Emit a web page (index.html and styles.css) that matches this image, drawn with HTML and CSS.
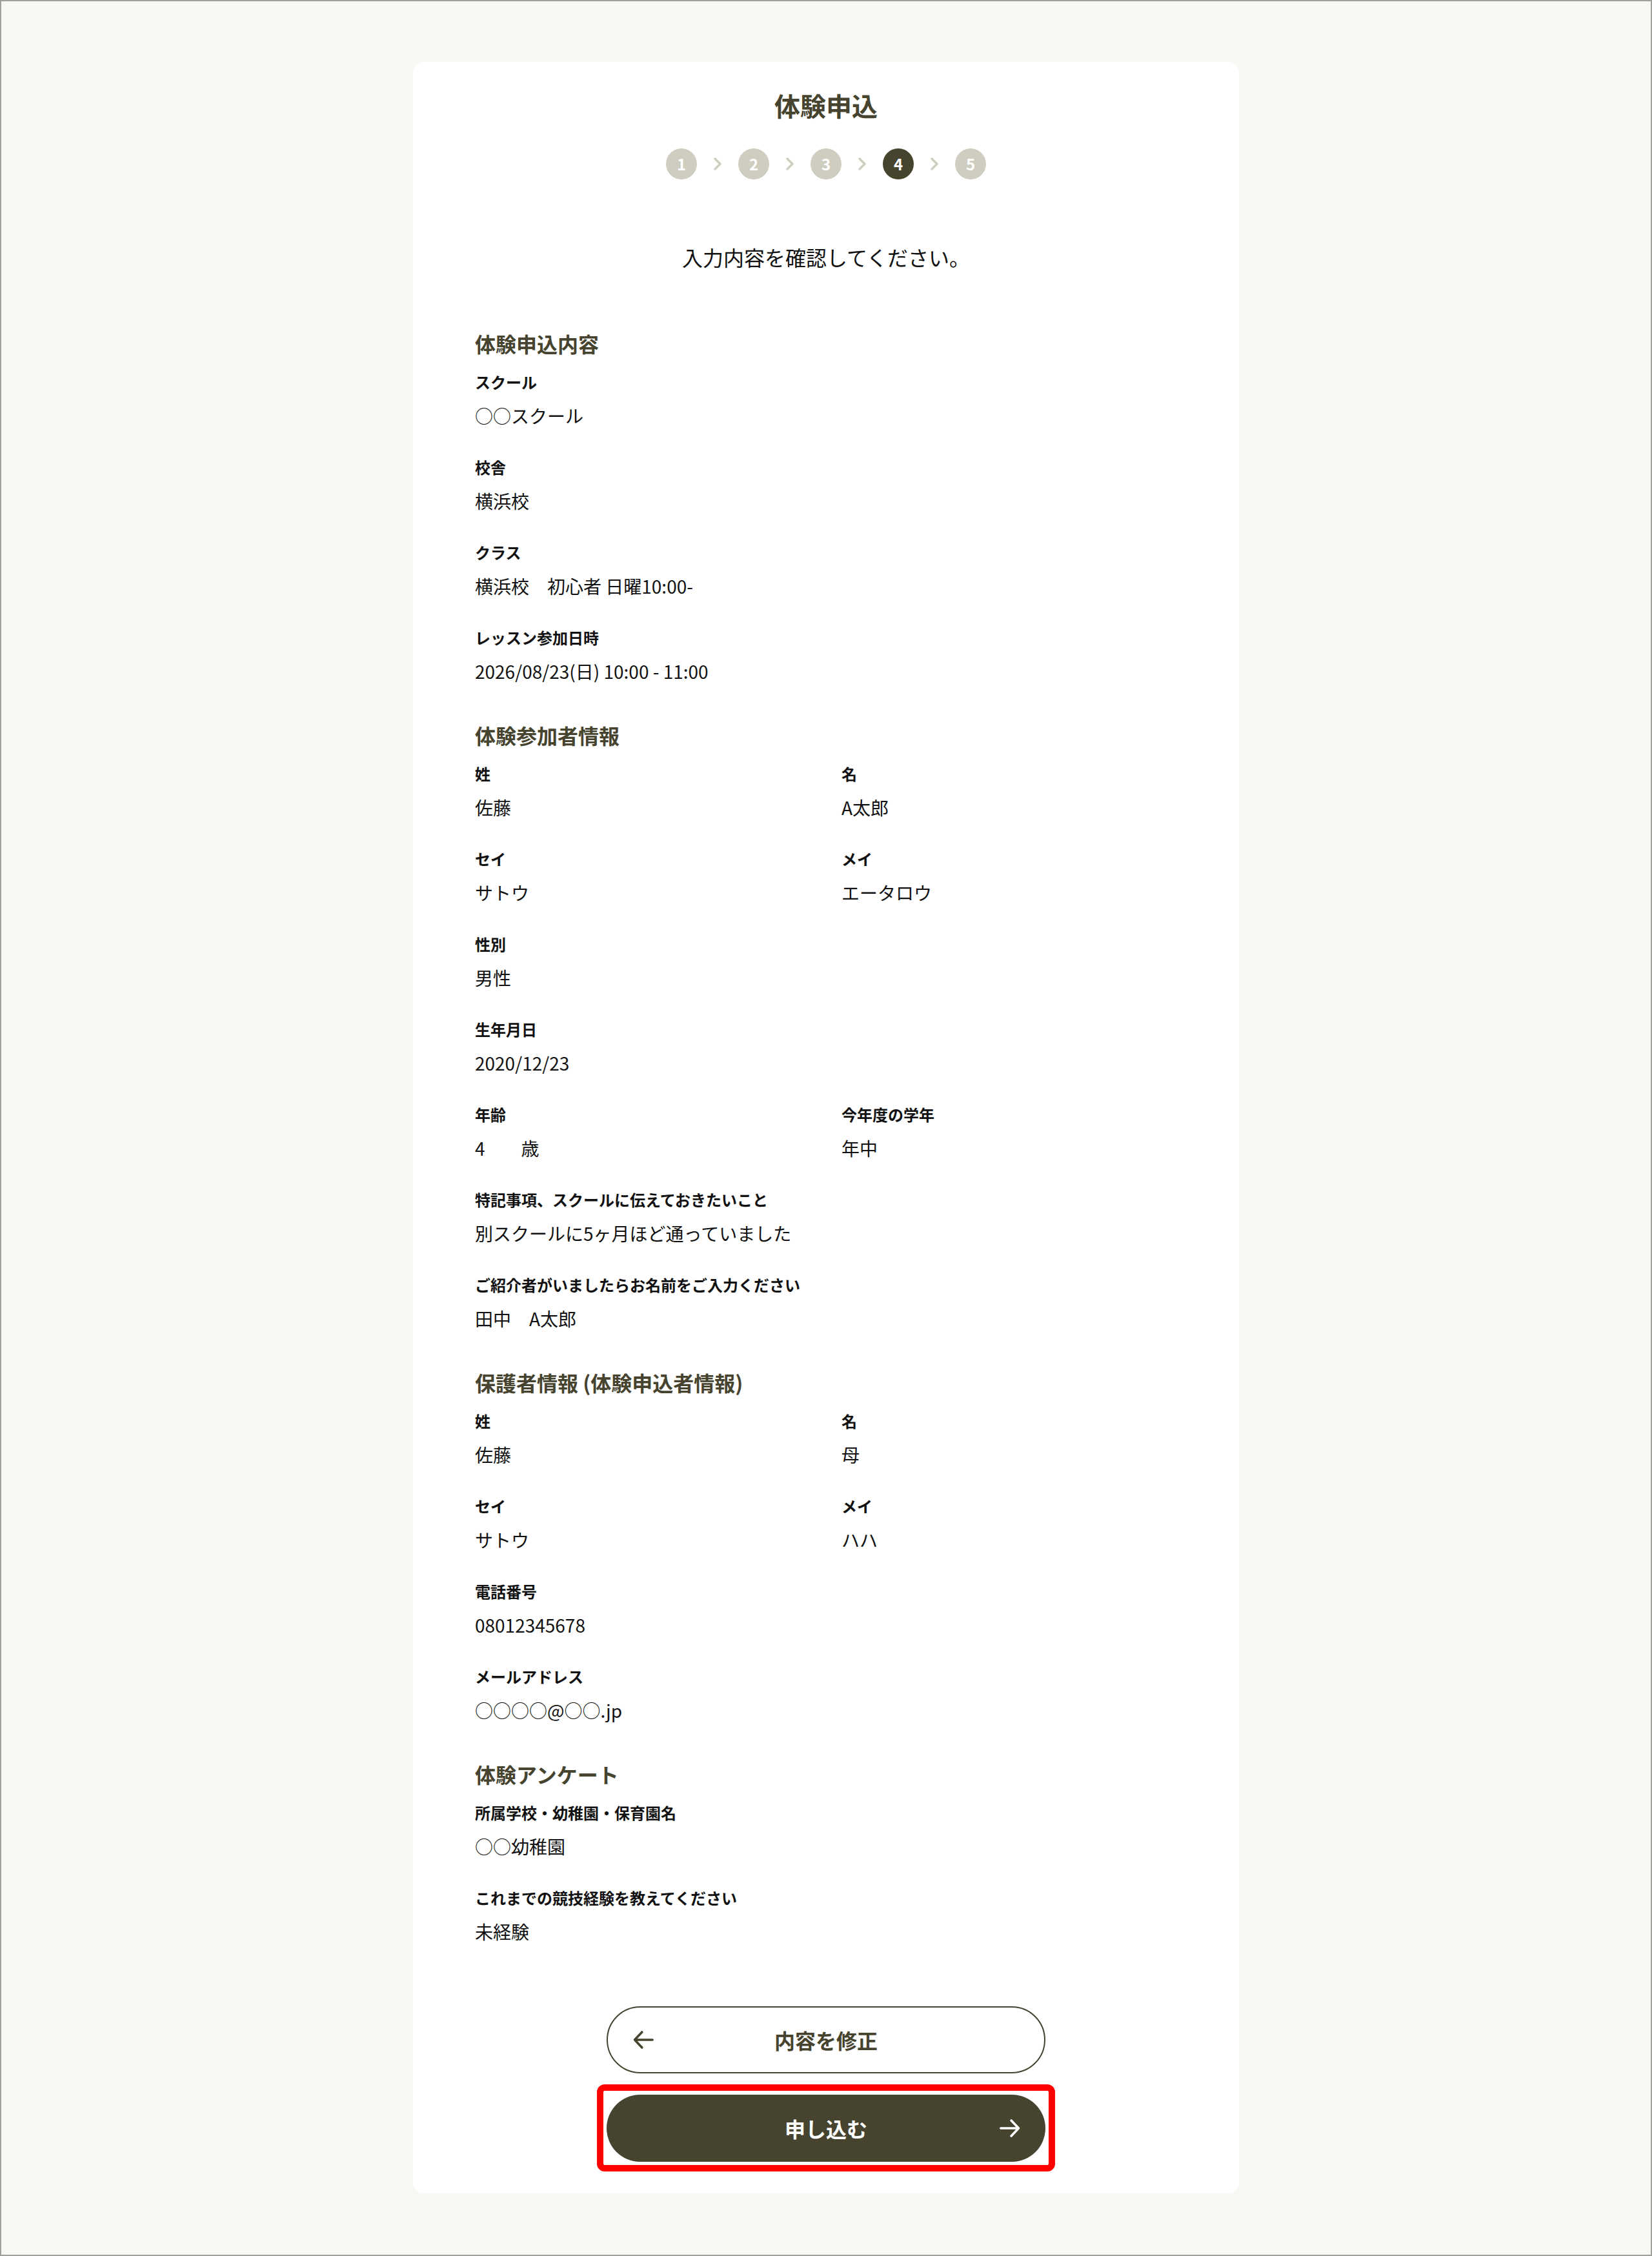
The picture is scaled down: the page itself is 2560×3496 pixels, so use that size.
FILE: index.html
```html
<!DOCTYPE html>
<html lang="ja">
<head>
<meta charset="utf-8">
<title>体験申込</title>
<link rel="stylesheet" href="styles.css">
</head>
<body>
<div class="frame">
  <main class="card">
    <h1 class="title">体験申込</h1>
    <ol class="steps">
      <li class="step">1</li>
      <li class="sep"><svg viewBox="0 0 14 22" width="14" height="22"><path d="M3 3l8 8-8 8" fill="none" stroke="#cfcdbf" stroke-width="3.5" stroke-linecap="round" stroke-linejoin="round"/></svg></li>
      <li class="step">2</li>
      <li class="sep"><svg viewBox="0 0 14 22" width="14" height="22"><path d="M3 3l8 8-8 8" fill="none" stroke="#cfcdbf" stroke-width="3.5" stroke-linecap="round" stroke-linejoin="round"/></svg></li>
      <li class="step">3</li>
      <li class="sep"><svg viewBox="0 0 14 22" width="14" height="22"><path d="M3 3l8 8-8 8" fill="none" stroke="#cfcdbf" stroke-width="3.5" stroke-linecap="round" stroke-linejoin="round"/></svg></li>
      <li class="step active">4</li>
      <li class="sep"><svg viewBox="0 0 14 22" width="14" height="22"><path d="M3 3l8 8-8 8" fill="none" stroke="#cfcdbf" stroke-width="3.5" stroke-linecap="round" stroke-linejoin="round"/></svg></li>
      <li class="step">5</li>
    </ol>
    <p class="lead">入力内容を確認してください。</p>

    <section class="sec">
      <h2 class="sec-title">体験申込内容</h2>
      <div class="grid">
        <div class="item full"><div class="label">スクール</div><div class="value">○○スクール</div></div>
        <div class="item full"><div class="label">校舎</div><div class="value">横浜校</div></div>
        <div class="item full"><div class="label">クラス</div><div class="value">横浜校　初心者 日曜10:00-</div></div>
        <div class="item full"><div class="label">レッスン参加日時</div><div class="value">2026/08/23(日) 10:00 - 11:00</div></div>
      </div>
    </section>

    <section class="sec">
      <h2 class="sec-title">体験参加者情報</h2>
      <div class="grid">
        <div class="item"><div class="label">姓</div><div class="value">佐藤</div></div>
        <div class="item"><div class="label">名</div><div class="value">A太郎</div></div>
        <div class="item"><div class="label">セイ</div><div class="value">サトウ</div></div>
        <div class="item"><div class="label">メイ</div><div class="value">エータロウ</div></div>
        <div class="item full"><div class="label">性別</div><div class="value">男性</div></div>
        <div class="item full"><div class="label">生年月日</div><div class="value">2020/12/23</div></div>
        <div class="item"><div class="label">年齢</div><div class="value">4　　歳</div></div>
        <div class="item"><div class="label">今年度の学年</div><div class="value">年中</div></div>
        <div class="item full"><div class="label">特記事項、スクールに伝えておきたいこと</div><div class="value">別スクールに5ヶ月ほど通っていました</div></div>
        <div class="item full"><div class="label">ご紹介者がいましたらお名前をご入力ください</div><div class="value">田中　A太郎</div></div>
      </div>
    </section>

    <section class="sec">
      <h2 class="sec-title">保護者情報 (体験申込者情報)</h2>
      <div class="grid">
        <div class="item"><div class="label">姓</div><div class="value">佐藤</div></div>
        <div class="item"><div class="label">名</div><div class="value">母</div></div>
        <div class="item"><div class="label">セイ</div><div class="value">サトウ</div></div>
        <div class="item"><div class="label">メイ</div><div class="value">ハハ</div></div>
        <div class="item full"><div class="label">電話番号</div><div class="value">08012345678</div></div>
        <div class="item full"><div class="label">メールアドレス</div><div class="value">○○○○@○○.jp</div></div>
      </div>
    </section>

    <section class="sec">
      <h2 class="sec-title">体験アンケート</h2>
      <div class="grid">
        <div class="item full"><div class="label">所属学校・幼稚園・保育園名</div><div class="value">○○幼稚園</div></div>
        <div class="item full"><div class="label">これまでの競技経験を教えてください</div><div class="value">未経験</div></div>
      </div>
    </section>

    <div class="actions">
      <button class="btn btn-outline" type="button">
        <svg class="btn-icon left" viewBox="0 0 24 24" width="34" height="34"><path d="M22 12H2.5M10.5 3.5L2.5 12l8 8.5" fill="none" stroke="#46432f" stroke-width="2.5" stroke-linecap="round" stroke-linejoin="round"/></svg>
        <span>内容を修正</span>
      </button>
      <button class="btn btn-primary" type="button">
        <span>申し込む</span>
        <svg class="btn-icon right" viewBox="0 0 24 24" width="34" height="34"><path d="M2 12h19.5M13.5 3.5l8 8.5-8 8.5" fill="none" stroke="#ffffff" stroke-width="2.5" stroke-linecap="round" stroke-linejoin="round"/></svg>
      </button>
    </div>
  </main>
</div>
</body>
</html>
```

FILE: styles.css
```css
* { box-sizing: border-box; }

html, body {
  margin: 0;
  padding: 0;
}

body {
  font-family: "Noto Sans CJK JP", "Noto Sans", sans-serif;
  color: #111111;
  background: #f7f8f3;
}

.frame {
  min-height: 100vh;
  border: 2px solid #a0a0a0;
  background: #f7f8f3;
  padding: 94px 0 93px;
}

.card {
  width: 1280px;
  margin: 0 auto;
  background: #ffffff;
  border-radius: 16px;
  padding: 38px 96px 49px;
}

.title {
  margin: 0;
  text-align: center;
  font-size: 40px;
  line-height: 58px;
  font-weight: 700;
  color: #46432f;
}

.steps {
  list-style: none;
  margin: 38px 0 0;
  padding: 0;
  display: flex;
  justify-content: center;
  align-items: center;
}

.step {
  width: 48px;
  height: 48px;
  border-radius: 50%;
  background: #cfcdbf;
  color: #ffffff;
  font-size: 24px;
  font-weight: 700;
  display: flex;
  align-items: center;
  justify-content: center;
  line-height: 1;
}

.step.active {
  background: #46432f;
}

.sep {
  width: 64px;
  display: flex;
  justify-content: center;
  align-items: center;
}

.sep svg { display: block; }

.lead {
  margin: 96px 0 0;
  text-align: center;
  font-size: 32px;
  line-height: 48px;
  font-weight: 400;
  color: #111111;
}

.sec { margin-top: 54px; }
.lead + .sec { margin-top: 86px; }

.sec-title {
  margin: 0 0 18px;
  font-size: 32px;
  line-height: 48px;
  font-weight: 700;
  color: #46432f;
}

.grid {
  display: grid;
  grid-template-columns: 1fr 1fr;
  column-gap: 48px;
  row-gap: 41px;
}

.item.full { grid-column: 1 / -1; }

.label {
  font-size: 24px;
  line-height: 36px;
  font-weight: 700;
  color: #111111;
  margin-bottom: 13px;
}

.value {
  font-size: 28px;
  line-height: 42px;
  font-weight: 400;
  color: #111111;
}

.actions {
  margin-top: 95px;
  display: flex;
  flex-direction: column;
  align-items: center;
  gap: 33px;
}

.btn {
  position: relative;
  width: 680px;
  height: 104px;
  border-radius: 52px;
  font-family: inherit;
  font-size: 32px;
  font-weight: 700;
  display: flex;
  align-items: center;
  justify-content: center;
  padding: 0;
  cursor: pointer;
}

.btn-outline {
  background: #ffffff;
  border: 2px solid #46432f;
  color: #46432f;
}

.btn-primary {
  background: #46432f;
  border: none;
  color: #ffffff;
}

.btn-primary::after {
  content: "";
  position: absolute;
  inset: -16px -15px -15px -15px;
  border: 10px solid #ff0000;
  border-radius: 12px;
  pointer-events: none;
}

.btn-icon {
  position: absolute;
  top: 50%;
  transform: translateY(-50%);
  display: block;
}

.btn-icon.left { left: 38px; }
.btn-icon.right { right: 38px; }
```
